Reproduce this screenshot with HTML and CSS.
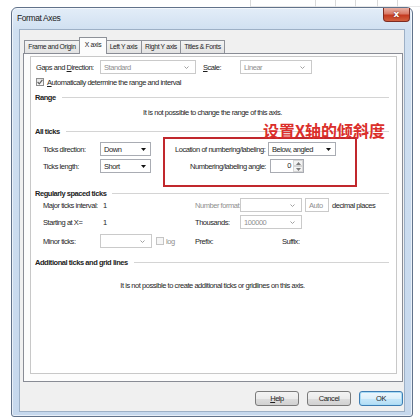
FILE: index.html
```html
<!DOCTYPE html>
<html lang="en">
  <head>
    <meta charset="UTF-8" />
    <meta name="viewport" content="width=device-width, initial-scale=1.0" />
    <title>Format Axes</title>
    <link rel="stylesheet" href="styles.css">
  </head>
  <body>
    <div class="sheet">
      <span class="blank"></span>
      <span class="cell c65"></span>
      <span class="cell c20"></span>
      <span class="cell c20"></span>
      <span class="cell c22"></span>
      <span class="cell c20"></span>
      <span class="cell rest"></span>
    </div>

    <div class="window">
      <div class="titlebar">
        <span class="title">Format Axes</span>
        <span class="close">x</span>
      </div>

      <div class="client">
        <div class="tabs">
          <span class="tab t-frame">Frame and Origin</span>
          <span class="tab active">X axis</span>
          <span class="tab t-left">Left Y axis</span>
          <span class="tab t-right">Right Y axis</span>
          <span class="tab t-titles">Titles &amp; Fonts</span>
        </div>

        <div class="panel">
          <div class="page">
            <div class="row r-gaps">
              <span class="label w64">Gaps and <u>D</u>irection:</span>
              <span class="combo off w96">Standard
                <svg class="chev" width="5" height="3" viewBox="0 0 5 3"><path d="M0.5 0.5 L2.5 2.5 L4.5 0.5" fill="none" stroke="#a0a0a0"/></svg>
              </span>
              <span class="label w37 ml7"><u>S</u>cale:</span>
              <span class="combo off w72">Linear
                <svg class="chev" width="5" height="3" viewBox="0 0 5 3"><path d="M0.5 0.5 L2.5 2.5 L4.5 0.5" fill="none" stroke="#a0a0a0"/></svg>
              </span>
            </div>

            <div class="row r-auto">
              <span class="check">
                <svg width="6" height="6" viewBox="0 0 6 6"><path d="M0.6 3 L2.3 4.8 L5.4 0.9" fill="none" stroke="#5e5e5e" stroke-width="1.2"/></svg>
              </span>
              <span class="ml3"><u>A</u>utomatically determine the range and interval</span>
            </div>

            <div class="group g-range">Range</div>
            <div class="note n-range">It is not possible to change the range of this axis.</div>

            <div class="group g-all">All ticks</div>
            <div class="row indent r-dir">
              <span class="label w57">Ticks direction:</span>
              <span class="combo w51">Down
                <svg class="tri" width="5" height="3" viewBox="0 0 5 3"><path d="M0 0 H5 L2.5 3 Z" fill="#111"/></svg>
              </span>
              <span class="label w91 ml24">Location of numbering/labeling:</span>
              <span class="combo w68 ml2">Below, angled
                <svg class="tri" width="5" height="3" viewBox="0 0 5 3"><path d="M0 0 H5 L2.5 3 Z" fill="#111"/></svg>
              </span>
            </div>
            <div class="row indent r-len">
              <span class="label w57">Ticks length:</span>
              <span class="combo w51">Short
                <svg class="tri" width="5" height="3" viewBox="0 0 5 3"><path d="M0 0 H5 L2.5 3 Z" fill="#111"/></svg>
              </span>
              <span class="label w91 ml24 right">Numbering/labeling angle:</span>
              <span class="spin ml4">
                <span class="spin-value">0</span>
                <span class="spin-buttons">
                  <span class="spin-btn"><svg width="5" height="3" viewBox="0 0 5 3"><path d="M0 3 H5 L2.5 0 Z" fill="#7a7a7a"/></svg></span>
                  <span class="spin-btn"><svg width="5" height="3" viewBox="0 0 5 3"><path d="M0 0 H5 L2.5 3 Z" fill="#7a7a7a"/></svg></span>
                </span>
              </span>
            </div>

            <div class="group g-regular">Regularly spaced ticks</div>
            <div class="row indent r-major">
              <span class="left">
                <span class="label w57">Major ticks interval:</span>
                <span class="ml3">1</span>
              </span>
              <span class="label w45 off">Number format:</span>
              <span class="combo off w62">
                <svg class="chev" width="5" height="3" viewBox="0 0 5 3"><path d="M0.5 0.5 L2.5 2.5 L4.5 0.5" fill="none" stroke="#a0a0a0"/></svg>
              </span>
              <span class="combo off w24 ml3">Auto
                <svg class="chev" width="5" height="3" viewBox="0 0 5 3"><path d="M0.5 0.5 L2.5 2.5 L4.5 0.5" fill="none" stroke="#a0a0a0"/></svg>
              </span>
              <span class="ml3">decimal places</span>
            </div>
            <div class="row indent r-start">
              <span class="left">
                <span class="label w57">Starting at X=</span>
                <span class="ml3">1</span>
              </span>
              <span class="label w45">Thousands:</span>
              <span class="combo off w62">100000
                <svg class="chev" width="5" height="3" viewBox="0 0 5 3"><path d="M0.5 0.5 L2.5 2.5 L4.5 0.5" fill="none" stroke="#a0a0a0"/></svg>
              </span>
            </div>
            <div class="row indent r-minor">
              <span class="left">
                <span class="label w57">Minor ticks:</span>
                <span class="combo off w52">
                  <svg class="chev" width="5" height="3" viewBox="0 0 5 3"><path d="M0.5 0.5 L2.5 2.5 L4.5 0.5" fill="none" stroke="#a0a0a0"/></svg>
                </span>
                <span class="check off ml4"></span>
                <span class="muted ml2">log</span>
              </span>
              <span class="label w87">Prefix:</span>
              <span>Suffix:</span>
            </div>

            <div class="group g-more">Additional ticks and grid lines</div>
            <div class="note n-more">It is not possible to create additional ticks or gridlines on this axis.</div>

            <div class="mark-box"></div>
            <div class="mark-text">设置X轴的倾斜度</div>
          </div>
        </div>

        <div class="buttons">
          <button class="button"><u>H</u>elp</button>
          <button class="button">Cancel</button>
          <button class="button default">OK</button>
        </div>
      </div>
    </div>
  </body>
</html>
```

FILE: styles.css
```css
* {
  box-sizing: border-box;
}
body {
  margin: 0;
  background-color: #fff;
  font-family: "Liberation Sans", Arial, sans-serif;
  font-size: 7.5px;
  letter-spacing: -0.45px;
  color: #1e1e1e;
}

/* spreadsheet behind the dialog */
.sheet {
  display: flex;
  height: 7px;
}
.cell {
  border-left: 1px solid #dadada;
  border-bottom: 1px solid #e8e8e8;
}
.blank {
  width: 250px;
}
.c65 {
  width: 65px;
}
.c20 {
  width: 20px;
}
.c22 {
  width: 22px;
}
.rest {
  flex: 1;
}

/* window frame */
.window {
  width: 402px;
  height: 410px;
  margin-left: 11px;
  padding: 0 7px 4px;
  display: flex;
  flex-direction: column;
  border: 1px solid #61728a;
  border-radius: 6px 6px 3px 3px;
  background: linear-gradient(#e3edf8, #d0e0f1 22px, #c6d8ed);
  box-shadow: inset 0 0 0 1px rgba(255, 255, 255, 0.6);
}
.titlebar {
  display: flex;
  justify-content: space-between;
  align-items: flex-start;
  height: 21px;
  margin: 0 -7px;
  padding: 0 2px 0 5px;
}
.title {
  padding-top: 5px;
  font-size: 8.5px;
  letter-spacing: -0.4px;
  line-height: 11px;
  color: #1a1a1a;
}
.close {
  width: 27px;
  height: 14px;
  display: flex;
  justify-content: center;
  align-items: center;
  border: 1px solid #7e2c22;
  border-top: none;
  border-radius: 0 0 4px 4px;
  background: linear-gradient(#eab0a4, #d97a66 45%, #c43a20 55%, #d2613f);
  color: #fff;
  font-family: "DejaVu Sans", sans-serif;
  font-size: 9px;
  font-weight: bold;
  letter-spacing: 0;
  line-height: 1;
  text-shadow: 0 0 2px #5b1308;
}
.client {
  flex: 1;
  display: flex;
  flex-direction: column;
  padding: 7px 1px 5px 3px;
  border: 1px solid #9db0c6;
  background-color: #f0f0f0;
}

/* tabs */
.tabs {
  position: relative;
  z-index: 1;
  display: flex;
  align-items: flex-end;
  height: 17px;
  margin-bottom: -1px;
  padding-left: 1px;
}
.tab {
  display: flex;
  justify-content: center;
  height: 13px;
  margin: 0 -1px 1px 0;
  border: 1px solid #8e9198;
  border-bottom: none;
  background: linear-gradient(#f4f4f4, #e2e2e2);
  font-size: 6.8px;
  letter-spacing: -0.35px;
  line-height: 12px;
  white-space: nowrap;
}
.t-frame {
  width: 56px;
}
.t-left {
  width: 37px;
}
.t-right {
  width: 40px;
}
.t-titles {
  width: 45px;
}
.tab.active {
  position: relative;
  width: 28px;
  height: 17px;
  margin: 0 -2px 0 0;
  background: #fcfcfc;
  line-height: 13px;
}
.panel {
  flex: 1;
  display: flex;
  padding: 2px 5px 7px 6px;
  border: 1px solid #898c95;
  background-color: #fcfcfc;
}
.page {
  flex: 1;
  position: relative;
  display: flex;
  flex-direction: column;
  padding-left: 4px;
  border: 1px solid #c8c8c8;
  background-color: #fff;
}

/* rows */
.row {
  display: flex;
  align-items: center;
  height: 14px;
  white-space: nowrap;
}
.indent {
  padding-left: 8px;
}
.r-gaps {
  margin-top: 3px;
  padding-left: 1px;
}
.r-auto {
  margin-top: 1px;
  padding-left: 1px;
}
.r-dir {
  margin-top: 6px;
}
.r-len {
  margin-top: 3px;
}
.r-major {
  margin-top: 0;
}
.r-start {
  margin-top: 3px;
}
.r-minor {
  margin-top: 5px;
}
.left {
  display: flex;
  align-items: center;
  width: 152px;
}
.label {
  flex: none;
}
.right {
  text-align: right;
}
.off,
.muted {
  color: #8f8f8f;
}
.w24 { width: 24px; }
.w37 { width: 37px; }
.w45 { width: 45px; }
.w51 { width: 51px; }
.w52 { width: 52px; }
.w57 { width: 57px; }
.w62 { width: 62px; }
.w64 { width: 64px; }
.w68 { width: 68px; }
.w72 { width: 72px; }
.w87 { width: 87px; }
.w91 { width: 91px; }
.w96 { width: 96px; }
.ml2 { margin-left: 2px; }
.ml3 { margin-left: 3px; }
.ml4 { margin-left: 4px; }
.ml7 { margin-left: 7px; }
.ml24 { margin-left: 24px; }

/* group headers */
.group {
  display: flex;
  align-items: center;
  height: 10px;
  font-weight: bold;
  color: #222;
}
.group::after {
  content: "";
  flex: 1;
  margin: 0 7px 0 6px;
  border-top: 1px solid #d4d4d4;
}
.g-range {
  margin-top: 3px;
}
.g-all {
  margin-top: 6px;
}
.g-regular {
  height: 9px;
  margin-top: 16px;
}
.g-more {
  margin-top: 9px;
}
.note {
  height: 14px;
  margin-right: 6px;
  line-height: 14px;
  text-align: center;
}
.n-range {
  margin-top: 4px;
}
.n-more {
  margin-top: 12px;
}

/* controls */
.combo {
  flex: none;
  display: flex;
  justify-content: space-between;
  align-items: center;
  height: 14px;
  padding: 0 4px 0 3px;
  border: 1px solid #a9acb3;
  background-color: #fff;
  color: #1e1e1e;
}
.combo.off {
  border-color: #cacaca;
  color: #8f8f8f;
  padding-right: 6px;
}
.combo svg {
  margin-left: auto;
}
.check {
  flex: none;
  display: flex;
  justify-content: center;
  align-items: center;
  width: 8px;
  height: 8px;
  border: 1px solid #8d8d8d;
  background: linear-gradient(#e4e4e4, #fbfbfb);
}
.check.off {
  border-color: #c4c4c4;
  background: #f6f6f6;
}
.spin {
  flex: none;
  display: flex;
  width: 34px;
  height: 14px;
  border: 1px solid #a9acb3;
  background-color: #fff;
}
.spin-value {
  flex: 1;
  padding-right: 2px;
  text-align: right;
  line-height: 12px;
}
.spin-buttons {
  display: flex;
  flex-direction: column;
  width: 10px;
}
.spin-btn {
  flex: 1;
  display: flex;
  justify-content: center;
  align-items: center;
  border: 1px solid #d6d6d6;
  background: #f3f3f3;
}

/* annotation drawn over the dialog */
.mark-box {
  position: absolute;
  left: 132px;
  top: 80px;
  width: 194px;
  height: 50px;
  border: 2px solid #c1282d;
}
.mark-text {
  position: absolute;
  left: 232px;
  top: 64px;
  font-family: "Noto Sans CJK SC", "Noto Sans", sans-serif;
  font-size: 16px;
  font-weight: bold;
  letter-spacing: 0;
  line-height: 18px;
  color: #db2f2b;
  white-space: nowrap;
}

/* dialog buttons */
.buttons {
  display: flex;
  justify-content: flex-end;
  gap: 8px;
  margin-top: 9px;
}
.button {
  width: 44px;
  height: 15px;
  padding: 0;
  border: 1px solid #7a7a7a;
  border-radius: 3px;
  background: linear-gradient(#f3f3f3, #ebebeb 50%, #dddddd 51%, #d1d1d1);
  font-family: inherit;
  font-size: 7.5px;
  letter-spacing: -0.45px;
  color: #1e1e1e;
}
.button.default {
  border-color: #3d7db3;
  background: linear-gradient(#eef7fd, #dcf0fb 50%, #c6e7fa 51%, #b3ddf4);
  box-shadow: inset 0 0 0 1px #a9dcf6;
}
```
